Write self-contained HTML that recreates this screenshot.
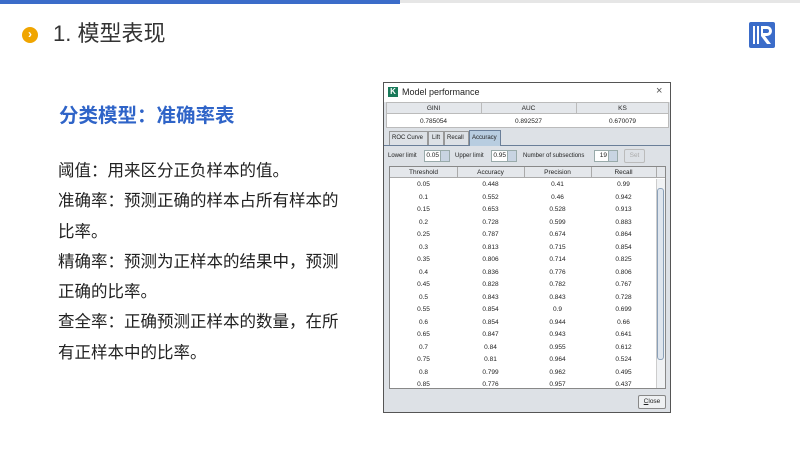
<!DOCTYPE html>
<html><head><meta charset="utf-8"><style>
*{margin:0;padding:0;box-sizing:border-box}
body{width:800px;height:450px;background:#fff;position:relative;overflow:hidden;font-family:"Liberation Sans","Noto Sans CJK SC",sans-serif}
.abs{position:absolute}
.cjk{font-family:"Liberation Sans","Noto Sans CJK SC",sans-serif}
.body p{font-size:16.5px;color:#222;line-height:30.3px;white-space:nowrap}
.dlg{left:383px;top:82px;width:288px;height:331px;background:#dde1e6;border:1px solid #555;font-size:6.5px;color:#222;white-space:nowrap}
.cell{position:absolute;text-align:center}
.inp{position:absolute;background:#fff;border:1px solid #9aa;height:12px;font-size:6.5px;line-height:10px;padding-right:10px;text-align:right}
.spin{position:absolute;right:0;top:0;width:9px;height:10px;background:#c8d4e2;border-left:1px solid #9aa}
</style></head><body>
<div class="abs" style="left:0;top:0;width:400px;height:4px;background:#3b6cc9"></div>
<div class="abs" style="left:400px;top:0;width:400px;height:3px;background:#e6e6e6"></div>
<div class="abs" style="left:22px;top:27px;width:16px;height:16px;border-radius:50%;background:#f0a500;color:#fff;font-size:12px;font-weight:bold;text-align:center;line-height:15px">›</div>
<div class="abs cjk" style="left:53px;top:19px;font-size:22px;color:#333;line-height:30px">1. 模型表现</div>
<svg class="abs" style="left:749px;top:22px" width="26" height="26" viewBox="0 0 26 26"><rect width="26" height="26" rx="2" fill="#3b6cc9"/><rect x="4" y="4" width="2" height="18" fill="#fff"/><rect x="8" y="4" width="2" height="18" fill="#fff"/><path d="M12 4h6a5 5 0 0 1 0 10h-2l6 8h-4l-6-8V4zM14 7v4h4a2 2 0 0 0 0-4z" fill="#fff"/></svg>
<div class="abs cjk" style="left:59px;top:99px;font-size:19.5px;font-weight:bold;color:#2f64c8;white-space:nowrap">分类模型：准确率表</div>
<div class="abs body" style="left:58px;top:156px">
<p>阈值：用来区分正负样本的值。</p>
<p>准确率：预测正确的样本占所有样本的</p>
<p>比率。</p>
<p>精确率：预测为正样本的结果中，预测</p>
<p>正确的比率。</p>
<p>查全率：正确预测正样本的数量，在所</p>
<p>有正样本中的比率。</p>
</div>
<div class="abs dlg">
<div class="abs" style="left:0;top:0;width:286px;height:19px;background:#fff"></div>
<div class="abs" style="left:4px;top:4px;width:10px;height:10px;background:#1a7a5a;color:#fff;font-size:8px;font-weight:bold;text-align:center;line-height:10px">K</div>
<div class="abs" style="left:18px;top:4px;font-size:9px">Model performance</div>
<div class="abs" style="left:272px;top:2px;font-size:11px;color:#555">×</div>
<div class="abs" style="left:2px;top:19px;width:283px;height:26px;background:#fff;border:1px solid #bbb"></div>
<div class="abs" style="left:2px;top:19px;width:283px;height:12px;background:#e4e7eb;border:1px solid #bbb"></div>
<div class="cell" style="left:2px;top:22px;width:95px">GINI</div>
<div class="cell" style="left:97px;top:22px;width:95px">AUC</div>
<div class="cell" style="left:192px;top:22px;width:93px">KS</div>
<div class="abs" style="left:97px;top:19px;width:1px;height:12px;background:#bbb"></div>
<div class="abs" style="left:192px;top:19px;width:1px;height:12px;background:#bbb"></div>
<div class="cell" style="left:2px;top:35px;width:95px">0.785054</div>
<div class="cell" style="left:97px;top:35px;width:95px">0.892527</div>
<div class="cell" style="left:192px;top:35px;width:93px">0.670079</div>
<div class="abs" style="left:0;top:62px;width:286px;height:1px;background:#6a7f99"></div>
<div class="abs" style="left:5px;top:48px;width:39px;height:14px;border:1px solid #999;border-bottom:none;padding:3px 0 0 2px;font-size:6px">ROC Curve</div>
<div class="abs" style="left:44px;top:48px;width:16px;height:14px;border:1px solid #999;border-bottom:none;padding:3px 0 0 3px;font-size:6px">Lift</div>
<div class="abs" style="left:60px;top:48px;width:25px;height:14px;border:1px solid #999;border-bottom:none;padding:3px 0 0 2px;font-size:6px">Recall</div>
<div class="abs" style="left:85px;top:47px;width:32px;height:16px;border:1px solid #6a7f99;border-bottom:none;background:#b8cde0;padding:4px 0 0 2px;font-size:6px">Accuracy</div>
<div class="abs" style="left:4px;top:70px;font-size:6px">Lower limit</div>
<div class="inp" style="left:40px;top:67px;width:26px">0.05<div class="spin"></div></div>
<div class="abs" style="left:71px;top:70px;font-size:6px">Upper limit</div>
<div class="inp" style="left:107px;top:67px;width:26px">0.95<div class="spin"></div></div>
<div class="abs" style="left:139px;top:70px;font-size:6px">Number of subsections</div>
<div class="inp" style="left:210px;top:67px;width:24px">19<div class="spin"></div></div>
<div class="abs" style="left:240px;top:66px;width:21px;height:14px;border:1px solid #bbb;border-radius:2px;color:#aaa;text-align:center;line-height:12px">Set</div>
<div class="abs" style="left:5px;top:83px;width:277px;height:223px;background:#fff;border:1px solid #888"></div>
<div class="abs" style="left:6px;top:84px;width:275px;height:11px;background:#e4e7eb;border-bottom:1px solid #aaa"></div>
<div class="cell" style="left:6px;top:86px;width:67px">Threshold</div>
<div class="cell" style="left:73px;top:86px;width:67px">Accuracy</div>
<div class="cell" style="left:140px;top:86px;width:67px">Precision</div>
<div class="cell" style="left:207px;top:86px;width:65px">Recall</div>
<div class="abs" style="left:73px;top:84px;width:1px;height:11px;background:#aaa"></div>
<div class="abs" style="left:140px;top:84px;width:1px;height:11px;background:#aaa"></div>
<div class="abs" style="left:207px;top:84px;width:1px;height:11px;background:#aaa"></div>
<div class="abs" style="left:272px;top:84px;width:1px;height:11px;background:#aaa"></div>
<div class="abs" style="left:272px;top:96px;width:9px;height:209px;background:#f0f2f4;border-left:1px solid #ccc"></div>
<div class="abs" style="left:273px;top:105px;width:7px;height:172px;background:#dfe6ee;border:1px solid #8aa0b8;border-radius:3px"></div>
<div id="rows"></div>
<div class="abs" style="left:254px;top:312px;width:28px;height:14px;border:1px solid #888;border-radius:2px;background:#eef0f2;text-align:center;line-height:12px"><u>C</u>lose</div>
</div>
<script>
var d=[["0.05","0.448","0.41","0.99"],["0.1","0.552","0.46","0.942"],["0.15","0.653","0.528","0.913"],["0.2","0.728","0.599","0.883"],["0.25","0.787","0.674","0.864"],["0.3","0.813","0.715","0.854"],["0.35","0.806","0.714","0.825"],["0.4","0.836","0.776","0.806"],["0.45","0.828","0.782","0.767"],["0.5","0.843","0.843","0.728"],["0.55","0.854","0.9","0.699"],["0.6","0.854","0.944","0.66"],["0.65","0.847","0.943","0.641"],["0.7","0.84","0.955","0.612"],["0.75","0.81","0.964","0.524"],["0.8","0.799","0.962","0.495"],["0.85","0.776","0.957","0.437"]];
var h="",L=[6,73,140,207],W=[67,67,67,65];
d.forEach(function(r,i){r.forEach(function(v,j){h+='<div class="cell" style="left:'+L[j]+'px;top:'+(98+i*12.5)+'px;width:'+W[j]+'px">'+v+'</div>'})});
document.getElementById("rows").outerHTML=h;
</script>
</body></html>
